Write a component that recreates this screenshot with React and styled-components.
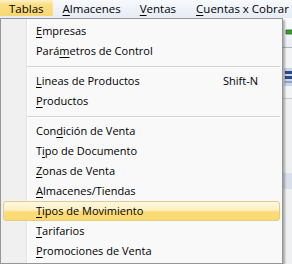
import React from "react";
import styled, { createGlobalStyle, css } from "styled-components";

const GlobalStyle = createGlobalStyle`
  html, body { margin: 0; padding: 0; }
  body {
    font-family: "Open Sans", "Noto Sans", sans-serif;
    font-size: 11px;
    color: #000;
    background: #eef0f3;
  }
`;

const Window = styled.div`
  position: relative;
  width: 292px;
  height: 264px;
  overflow: hidden;
  background: #eceef1;
  display: flex;
  flex-direction: column;
`;

const MenuBar = styled.div`
  display: flex;
  height: 18px;
  flex: none;
  background: linear-gradient(#f7f9fc, #e6ecf5);
  white-space: nowrap;
  font-size: 11.5px;
`;

const BarItem = styled.div`
  padding: 0 9px 0 ${(p) => p.$left || 9}px;
  line-height: 17px;
  height: 18px;
  ${(p) =>
    p.$active &&
    css`
      background: linear-gradient(#fdf2c9, #f9de84 30%, #f8d874) top / 100% 16px no-repeat;
    `}
`;

const Key = styled.span`
  text-decoration: underline;
  text-decoration-thickness: 1px;
  text-underline-offset: 2px;
`;

const Toolbar = styled.div`
  height: 29px;
  flex: none;
  display: flex;
  align-items: center;
  justify-content: flex-end;
  background: linear-gradient(#fbfcfd, #e9edf3);
  border-bottom: 1px solid #aeb6c2;
`;

const ToolIcon = styled.svg`
  margin-right: -7px;
  margin-top: -2px;
`;

const Panel = styled.div`
  height: 50px;
  flex: none;
  display: flex;
  align-items: center;
  justify-content: flex-end;
  background: #f3f4f6;
  border-bottom: 1px solid #c9ccd1;
`;

const ListIcon = styled.svg`
  margin-right: -4px;
  margin-top: 8px;
`;

const Body = styled.div`
  flex: 1;
  display: flex;
  flex-direction: column;
  align-items: flex-end;
  padding-top: 74px;
  background: #eef0f2;
`;

const InfoBox = styled.div`
  width: 10px;
  height: 16px;
  background: #d9e0ec;
`;

const Dropdown = styled.div`
  position: absolute;
  top: 18px;
  left: 0;
  width: 283px;
  box-sizing: border-box;
  padding: 2px;
  border: 1px solid #979797;
  background: linear-gradient(
    to right,
    #f0f0f0 0,
    #f0f0f0 25px,
    #e2e3e3 25px,
    #e2e3e3 26px,
    #ffffff 26px,
    #ffffff 27px,
    #f9f9f9 27px
  );
  box-shadow: 2px 2px 2px rgba(0, 0, 0, 0.3);
  white-space: nowrap;
`;

const Item = styled.div`
  height: 20px;
  box-sizing: border-box;
  display: flex;
  align-items: center;
  justify-content: space-between;
  padding: 0 21px 1px 32px;
  border: 1px solid transparent;
  border-radius: 3px;
  ${(p) =>
    p.$active &&
    css`
      border-color: #e3cc8a;
      background: linear-gradient(#fef8e2, #fdefc0 45%, #fbdc78 55%, #fad96f);
    `}
`;

const Shortcut = styled.span`
  color: #000;
`;

const Separator = styled.div`
  height: 10px;
  display: flex;
  align-items: center;
  padding-left: 24px;
  &::after {
    content: "";
    flex: 1;
    height: 1px;
    background: #d4d4d4;
    box-shadow: 0 1px 0 #ffffff;
  }
`;

const items = [
  { pre: "", key: "E", post: "mpresas" },
  { pre: "Pará", key: "m", post: "etros de Control" },
  "sep",
  { pre: "", key: "L", post: "ineas de Productos", shortcut: "Shift-N" },
  { pre: "", key: "P", post: "roductos" },
  "sep",
  { pre: "Con", key: "d", post: "ición de Venta" },
  { pre: "T", key: "i", post: "po de Documento" },
  { pre: "", key: "Z", post: "onas de Venta" },
  { pre: "", key: "A", post: "lmacenes/Tiendas" },
  { pre: "", key: "T", post: "ipos de Movimiento", active: true },
  { pre: "", key: "T", post: "arifarios" },
  { pre: "", key: "P", post: "romociones de Venta" },
];

export default function App() {
  return (
    <>
      <GlobalStyle />
      <Window>
        <MenuBar>
          <BarItem $active>Tablas</BarItem>
          <BarItem $left={10}>
            <Key>A</Key>lmacenes
          </BarItem>
          <BarItem $left={10}>
            <Key>V</Key>entas
          </BarItem>
          <BarItem $left={11}>
            <Key>C</Key>uentas x Cobrar
          </BarItem>
        </MenuBar>
        <Toolbar>
          <ToolIcon width="14" height="10" viewBox="0 0 14 10">
            <path d="M1 3 L8 3 L8 0 L13 5 L8 10 L8 7 L1 7 Z" fill="#3d9a2f" stroke="#1f6e1a" strokeWidth="0.8" />
          </ToolIcon>
        </Toolbar>
        <Panel>
          <ListIcon width="12" height="18" viewBox="0 0 12 18">
            <rect x="0" y="0" width="12" height="18" fill="#c9d5e8" />
            <rect x="1" y="3" width="11" height="3" fill="#2b4a86" />
            <rect x="1" y="8" width="11" height="3" fill="#2b4a86" />
            <rect x="1" y="13" width="11" height="2" fill="#8fa3c6" />
          </ListIcon>
        </Panel>
        <Body>
          <InfoBox />
        </Body>
        <Dropdown>
          {items.map((it, i) =>
            it === "sep" ? (
              <Separator key={i} />
            ) : (
              <Item key={i} $active={it.active}>
                <span>
                  {it.pre}
                  <Key>{it.key}</Key>
                  {it.post}
                </span>
                {it.shortcut && <Shortcut>{it.shortcut}</Shortcut>}
              </Item>
            )
          )}
        </Dropdown>
      </Window>
    </>
  );
}
